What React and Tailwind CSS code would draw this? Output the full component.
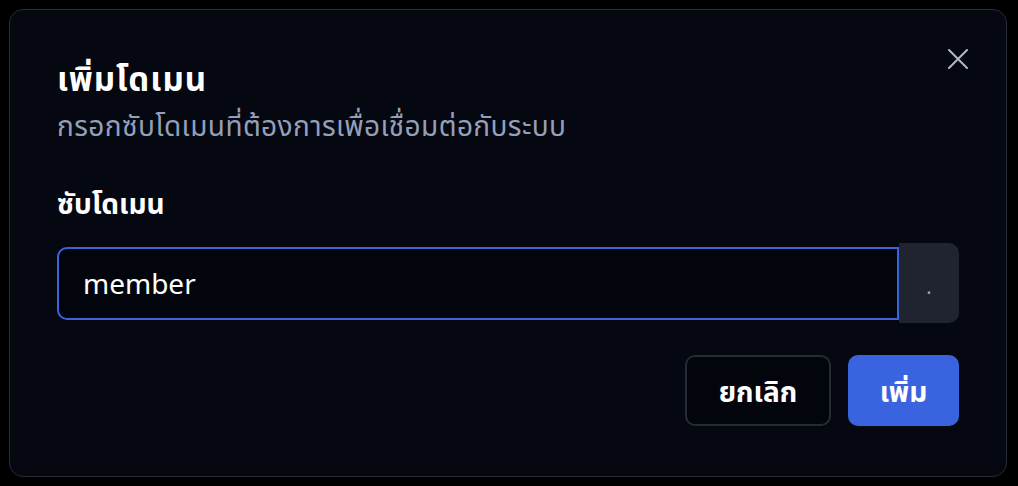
import React from 'react';

const CloseIcon = () => (
  <svg width="20" height="20" viewBox="0 0 20 20" fill="none" stroke="#b4b8c0" strokeWidth="2" strokeLinecap="round">
    <path d="M1 1L19 19M19 1L1 19" />
  </svg>
);

const App = () => {
  return (
    <div className="w-[1018px] h-[486px] bg-black pl-[9px] pr-[11px] pt-[9px] pb-[9px]" style={{ fontFamily: '"Noto Sans", "Noto Sans Thai", sans-serif' }}>
      <div className="relative h-full rounded-[14px] border border-[#262b35] bg-[#050711] pl-[47px] pr-[47px] pt-[49px]">
        <button className="absolute right-[38px] top-[39px] p-0">
          <CloseIcon />
        </button>

        <h2 className="text-[33px] leading-[40px] tracking-[1px] font-bold text-white">เพิ่มโดเมน</h2>
        <p className="mt-[8px] text-[28px] leading-[36px] tracking-[0.4px] text-[#94a0b8]">
          กรอกซับโดเมนที่ต้องการเพื่อเชื่อมต่อกับระบบ
        </p>

        <label className="mt-[42px] block text-[28px] leading-[36px] font-bold text-white">ซับโดเมน</label>

        <div className="mt-[22px] flex items-center">
          <input
            type="text"
            defaultValue="member"
            className="h-[73px] flex-1 rounded-l-[10px] border-2 border-[#3a63dc] bg-[#03050c] px-[24px] text-[28px] text-white outline-none"
          />
          <div className="flex h-[80px] w-[60px] items-center justify-center rounded-r-[10px] bg-[#1f2430] pt-[8px] text-[20px] text-[#9aa5b8]">
            .
          </div>
        </div>

        <div className="mt-[32px] flex justify-end gap-[17px]">
          <button className="h-[71px] w-[146px] rounded-[10px] border-2 border-[#262b35] bg-[#03050c] text-[28px] font-bold text-white">
            ยกเลิก
          </button>
          <button className="h-[71px] w-[111px] rounded-[10px] bg-[#3a63e0] text-[28px] font-bold text-white">
            เพิ่ม
          </button>
        </div>
      </div>
    </div>
  );
};

export default App;
